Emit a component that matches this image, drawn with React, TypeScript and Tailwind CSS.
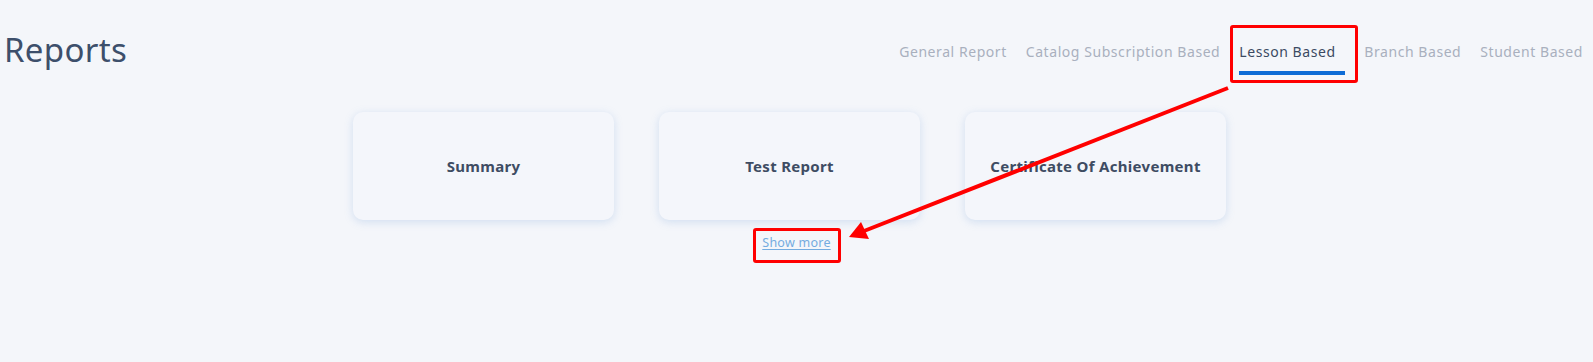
import React from "react";

const tabs = [
  { label: "General Report", active: false },
  { label: "Catalog Subscription Based", active: false },
  { label: "Lesson Based", active: true },
  { label: "Branch Based", active: false },
  { label: "Student Based", active: false },
];

const reports = ["Summary", "Test Report", "Certificate Of Achievement"];

const ReportCard = ({ title }: { title: string }) => (
  <div className="w-[261px] h-[108px] rounded-[10px] bg-[#f4f6fb] shadow-[0_2px_8px_rgba(120,160,220,0.28)] flex items-center justify-center">
    <span className="text-[15px] font-bold text-[#3e4c63] tracking-[0.02em]">{title}</span>
  </div>
);

const Annotations = () => (
  <>
    <div className="absolute left-[1230px] top-[25px] w-[128px] h-[58px] border-[3px] border-[#ff0000] rounded-[3px]" />
    <div className="absolute left-[753px] top-[228px] w-[88px] h-[35px] border-[3px] border-[#ff0000] rounded-[3px]" />
    <svg className="absolute left-0 top-0" width="1593" height="362">
      <line x1="1228" y1="88" x2="864" y2="231" stroke="#ff0000" strokeWidth="4" />
      <polygon points="849,237 861,222 869,239" fill="#ff0000" />
    </svg>
  </>
);

export default function App() {
  return (
    <div className="relative w-[1593px] h-[362px] bg-[#f4f6fa] overflow-hidden font-['Noto_Sans',sans-serif]">
      <div className="flex items-start justify-between h-[112px] pl-[4px] pr-[10px] pt-[26px]">
        <h1 className="text-[33px] leading-[48px] text-[#3d4f6b] tracking-[0.01em]">Reports</h1>
        <nav className="flex items-start gap-[19px] mt-[16px]">
          {tabs.map((t) => (
            <div key={t.label} className="flex flex-col items-start">
              <span
                className={
                  t.active
                    ? "text-[14px] leading-[20px] text-[#3b4a62] tracking-[0.04em]"
                    : "text-[14px] leading-[20px] text-[#a9b0be] tracking-[0.04em]"
                }
              >
                {t.label}
              </span>
              {t.active ? (
                <div className="mt-[9px] h-[4px] w-[106px] bg-[#0d6cd6]" />
              ) : (
                <div className="mt-[9px] h-[4px]" />
              )}
            </div>
          ))}
        </nav>
      </div>

      <div className="flex justify-center gap-[45px] pr-[14px]">
        {reports.map((r) => (
          <ReportCard key={r} title={r} />
        ))}
      </div>

      <div className="flex justify-center mt-[13px]">
        <a className="text-[12.5px] leading-[20px] text-[#74ace0] underline underline-offset-2 tracking-[0.02em]">Show more</a>
      </div>

      <Annotations />
    </div>
  );
}
